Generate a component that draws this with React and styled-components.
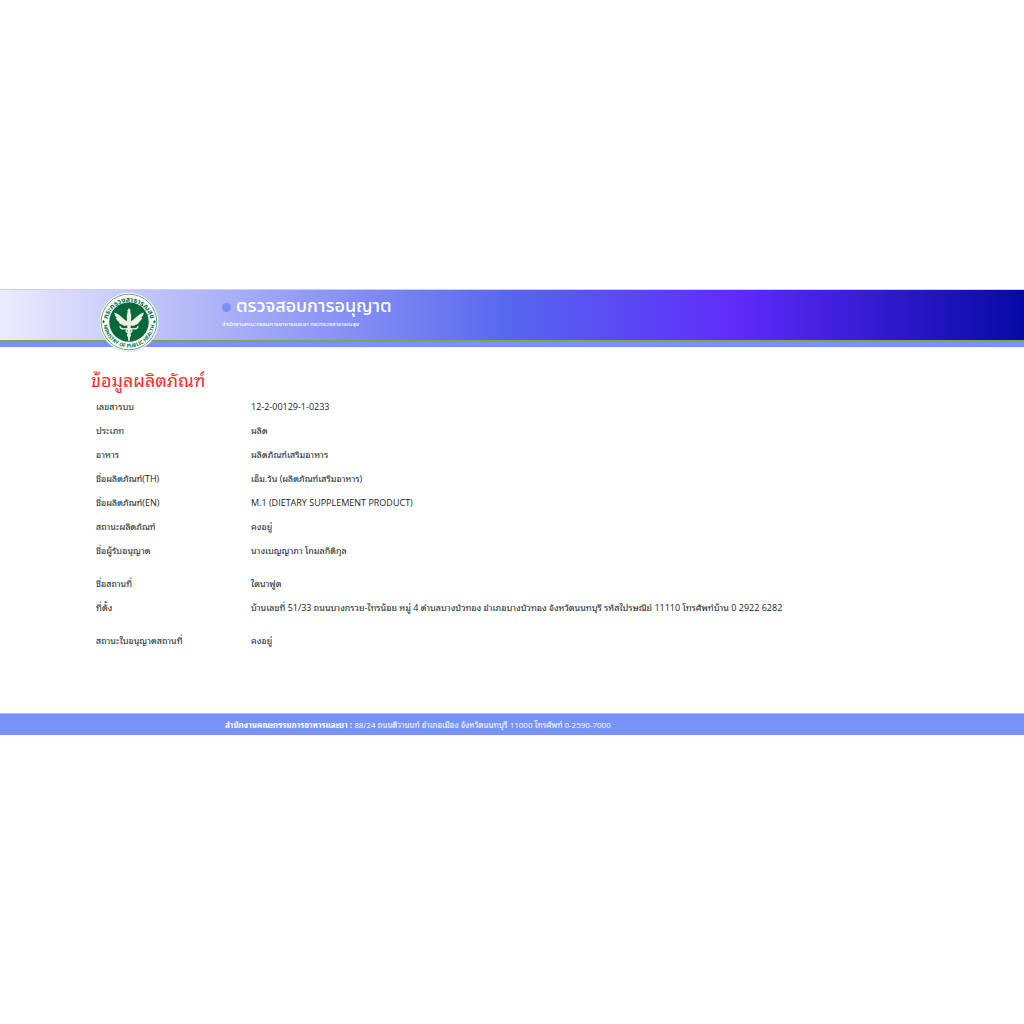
import React from "react";
import styled, { createGlobalStyle } from "styled-components";

const GlobalStyle = createGlobalStyle`
  * {
    box-sizing: border-box;
  }
  body {
    margin: 0;
    background: #fff;
    color: #212529;
    font-family: "Open Sans", "Noto Sans Thai Looped", "Noto Sans", sans-serif;
    font-size: 9px;
  }
`;

const Page = styled.div`
  min-height: 100vh;
  display: flex;
  flex-direction: column;
  justify-content: center;
`;

const Header = styled.header`
  height: 58px;
  padding-left: 99px;
  display: flex;
  align-items: flex-start;
  gap: 63px;
  border-top: 1px solid #cdcdf3;
  border-bottom: 5px solid #7793f7;
  background: linear-gradient(
    90deg,
    #ecebfd 0%,
    #5666ee 50%,
    #5f2bfa 72%,
    #060aa4 100%
  );
  box-shadow: inset 0 -2px 0 #82a545;
  font-family: "Noto Sans Thai", "Noto Sans", sans-serif;
`;

const Emblem = styled.svg`
  flex: none;
  width: 60px;
  height: 60px;
  margin-top: 2px;
`;

const Brand = styled.div`
  padding-top: 4px;
  color: #fff;
`;

const Title = styled.h1`
  display: flex;
  align-items: center;
  gap: 5px;
  margin: 0;
  font-size: 18px;
  font-weight: 500;
  line-height: 26px;
`;

const Dot = styled.span`
  width: 9px;
  height: 9px;
  border-radius: 50%;
  background: #7793f7;
`;

const Office = styled.p`
  margin: 0;
  font-size: 6px;
  font-weight: 500;
  line-height: 10px;
`;

const Main = styled.main`
  padding: 21px 91px 61px;
`;

const Heading = styled.h2`
  margin: 0 0 2px;
  color: #ff2b2b;
  font-size: 18px;
  font-weight: 400;
  line-height: 24px;
`;

const Table = styled.table`
  width: 100%;
  border-collapse: collapse;
`;

const Label = styled.th`
  width: 155px;
  height: ${(props) => (props.$spaced ? 33 : 24)}px;
  padding: 0 5px;
  padding-top: ${(props) => (props.$spaced ? 9 : 0)}px;
  font-weight: 400;
  text-align: left;
`;

const Value = styled.td`
  padding: 0 5px;
  padding-top: ${(props) => (props.$spaced ? 9 : 0)}px;
`;

const Footer = styled.footer`
  padding: 0 225px;
  border-top: 1px solid #a9bbf8;
  background: #7793f7;
  color: #fff;
  font-size: 8px;
  line-height: 21px;
  white-space: nowrap;
`;

const rows = [
  { label: "เลขสารบบ", value: "12-2-00129-1-0233" },
  { label: "ประเภท", value: "ผลิต" },
  { label: "อาหาร", value: "ผลิตภัณฑ์เสริมอาหาร" },
  { label: "ชื่อผลิตภัณฑ์(TH)", value: "เอ็ม.วัน (ผลิตภัณฑ์เสริมอาหาร)" },
  { label: "ชื่อผลิตภัณฑ์(EN)", value: "M.1 (DIETARY SUPPLEMENT PRODUCT)" },
  { label: "สถานะผลิตภัณฑ์", value: "คงอยู่" },
  { label: "ชื่อผู้รับอนุญาต", value: "นางเบญญาภา โกมลกิติกุล" },
  { label: "ชื่อสถานที่", value: "ไดนาฟูด", spaced: true },
  {
    label: "ที่ตั้ง",
    value:
      "บ้านเลขที่ 51/33 ถนนบางกรวย-ไทรน้อย หมู่ 4 ตำบลบางบัวทอง อำเภอบางบัวทอง จังหวัดนนทบุรี รหัสไปรษณีย์ 11110 โทรศัพท์บ้าน 0 2922 6282",
  },
  { label: "สถานะใบอนุญาตสถานที่", value: "คงอยู่", spaced: true },
];

const MinistryEmblem = () => (
  <Emblem viewBox="0 0 60 60" role="img" aria-label="Ministry of Public Health">
    <defs>
      <path id="arc-top" d="M8 32 A22 22 0 1 1 52 32" />
      <path id="arc-bottom" d="M4.5 30 A25.5 25.5 0 0 0 55.5 30" />
    </defs>
    <circle cx="30" cy="30" r="29.5" fill="#fff" stroke="#c5ccd6" strokeWidth="0.6" />
    <circle cx="30" cy="30" r="27.8" fill="none" stroke="#3c8a62" strokeWidth="0.8" />
    <circle cx="30" cy="30" r="19.8" fill="#07693b" />
    <g fill="#07693b" fontWeight="700" textAnchor="middle">
      <text fontSize="7">
        <textPath href="#arc-top" startOffset="50%">กระทรวงสาธารณสุข</textPath>
      </text>
      <text fontSize="5">
        <textPath href="#arc-bottom" startOffset="50%">MINISTRY OF PUBLIC HEALTH</textPath>
      </text>
    </g>
    <path d="M4.5 28 l1.4 1.8 -1.4 1.8 -1.2 -1.8z M55.5 28 l1.2 1.8 -1.2 1.8 -1.4 -1.8z" fill="#07693b" />
    <g fill="#eef3e6">
      <path d="M30 16l1.6 2.6-.6 2h-2l-.6-2z" />
      <path d="M28.6 20h2.8l.8 4-.7 16-.8 9h-1.4l-.8-9-.7-16z" />
      <path d="M28.6 29.5C24.8 28.4 22.6 23.2 15.2 20.6c.3 2.5 1.4 4.2 2.9 5.4-.5.1-.9 0-1.3-.1.9 2.3 2.3 3.7 4 4.4l-1.1.2c1.3 1.7 3.1 2.6 5.1 2.5l-.6.6c1.8.6 3.6.2 4.8-.8z" />
      <path d="M31.4 29.5c3.8-1.1 6-6.3 13.4-8.9-.3 2.5-1.4 4.2-2.9 5.4.5.1.9 0 1.3-.1-.9 2.3-2.3 3.7-4 4.4l1.1.2c-1.3 1.7-3.1 2.6-5.1 2.5l.6.6c-1.8.6-3.6.2-4.8-.8z" />
    </g>
    <g fill="none" stroke="#eef3e6" strokeWidth="1.2" strokeLinecap="round">
      <path d="M21 34.5c.5 2.2 2.5 2.6 4.5 2.4 3.2-.4 7.5-.6 7.5 2 0 2.2-4.5 2-4.5 4.2 0 1.2 1 1.6 1.8 2.2" />
      <path d="M39 34.5c-.5 2.2-2.5 2.6-4.5 2.4-3.2-.4-7.5-.6-7.5 2 0 2.2 4.5 2 4.5 4.2 0 1.2-1 1.6-1.8 2.2" />
    </g>
  </Emblem>
);

const App = () => {
  return (
    <>
      <GlobalStyle />
      <Page lang="th">
        <Header>
          <MinistryEmblem />
          <Brand>
            <Title>
              <Dot />
              ตรวจสอบการอนุญาต
            </Title>
            <Office>สำนักงานคณะกรรมการอาหารและยา กระทรวงสาธารณสุข</Office>
          </Brand>
        </Header>
        <Main>
          <Heading>ข้อมูลผลิตภัณฑ์</Heading>
          <Table>
            <tbody>
              {rows.map((row) => (
                <tr key={row.label}>
                  <Label scope="row" $spaced={row.spaced}>{row.label}</Label>
                  <Value $spaced={row.spaced}>{row.value}</Value>
                </tr>
              ))}
            </tbody>
          </Table>
        </Main>
        <Footer>
          <strong>สำนักงานคณะกรรมการอาหารและยา :</strong> 88/24 ถนนติวานนท์ อำเภอเมือง จังหวัดนนทบุรี 11000 โทรศัพท์ 0-2590-7000
        </Footer>
      </Page>
    </>
  );
};

export default App;
